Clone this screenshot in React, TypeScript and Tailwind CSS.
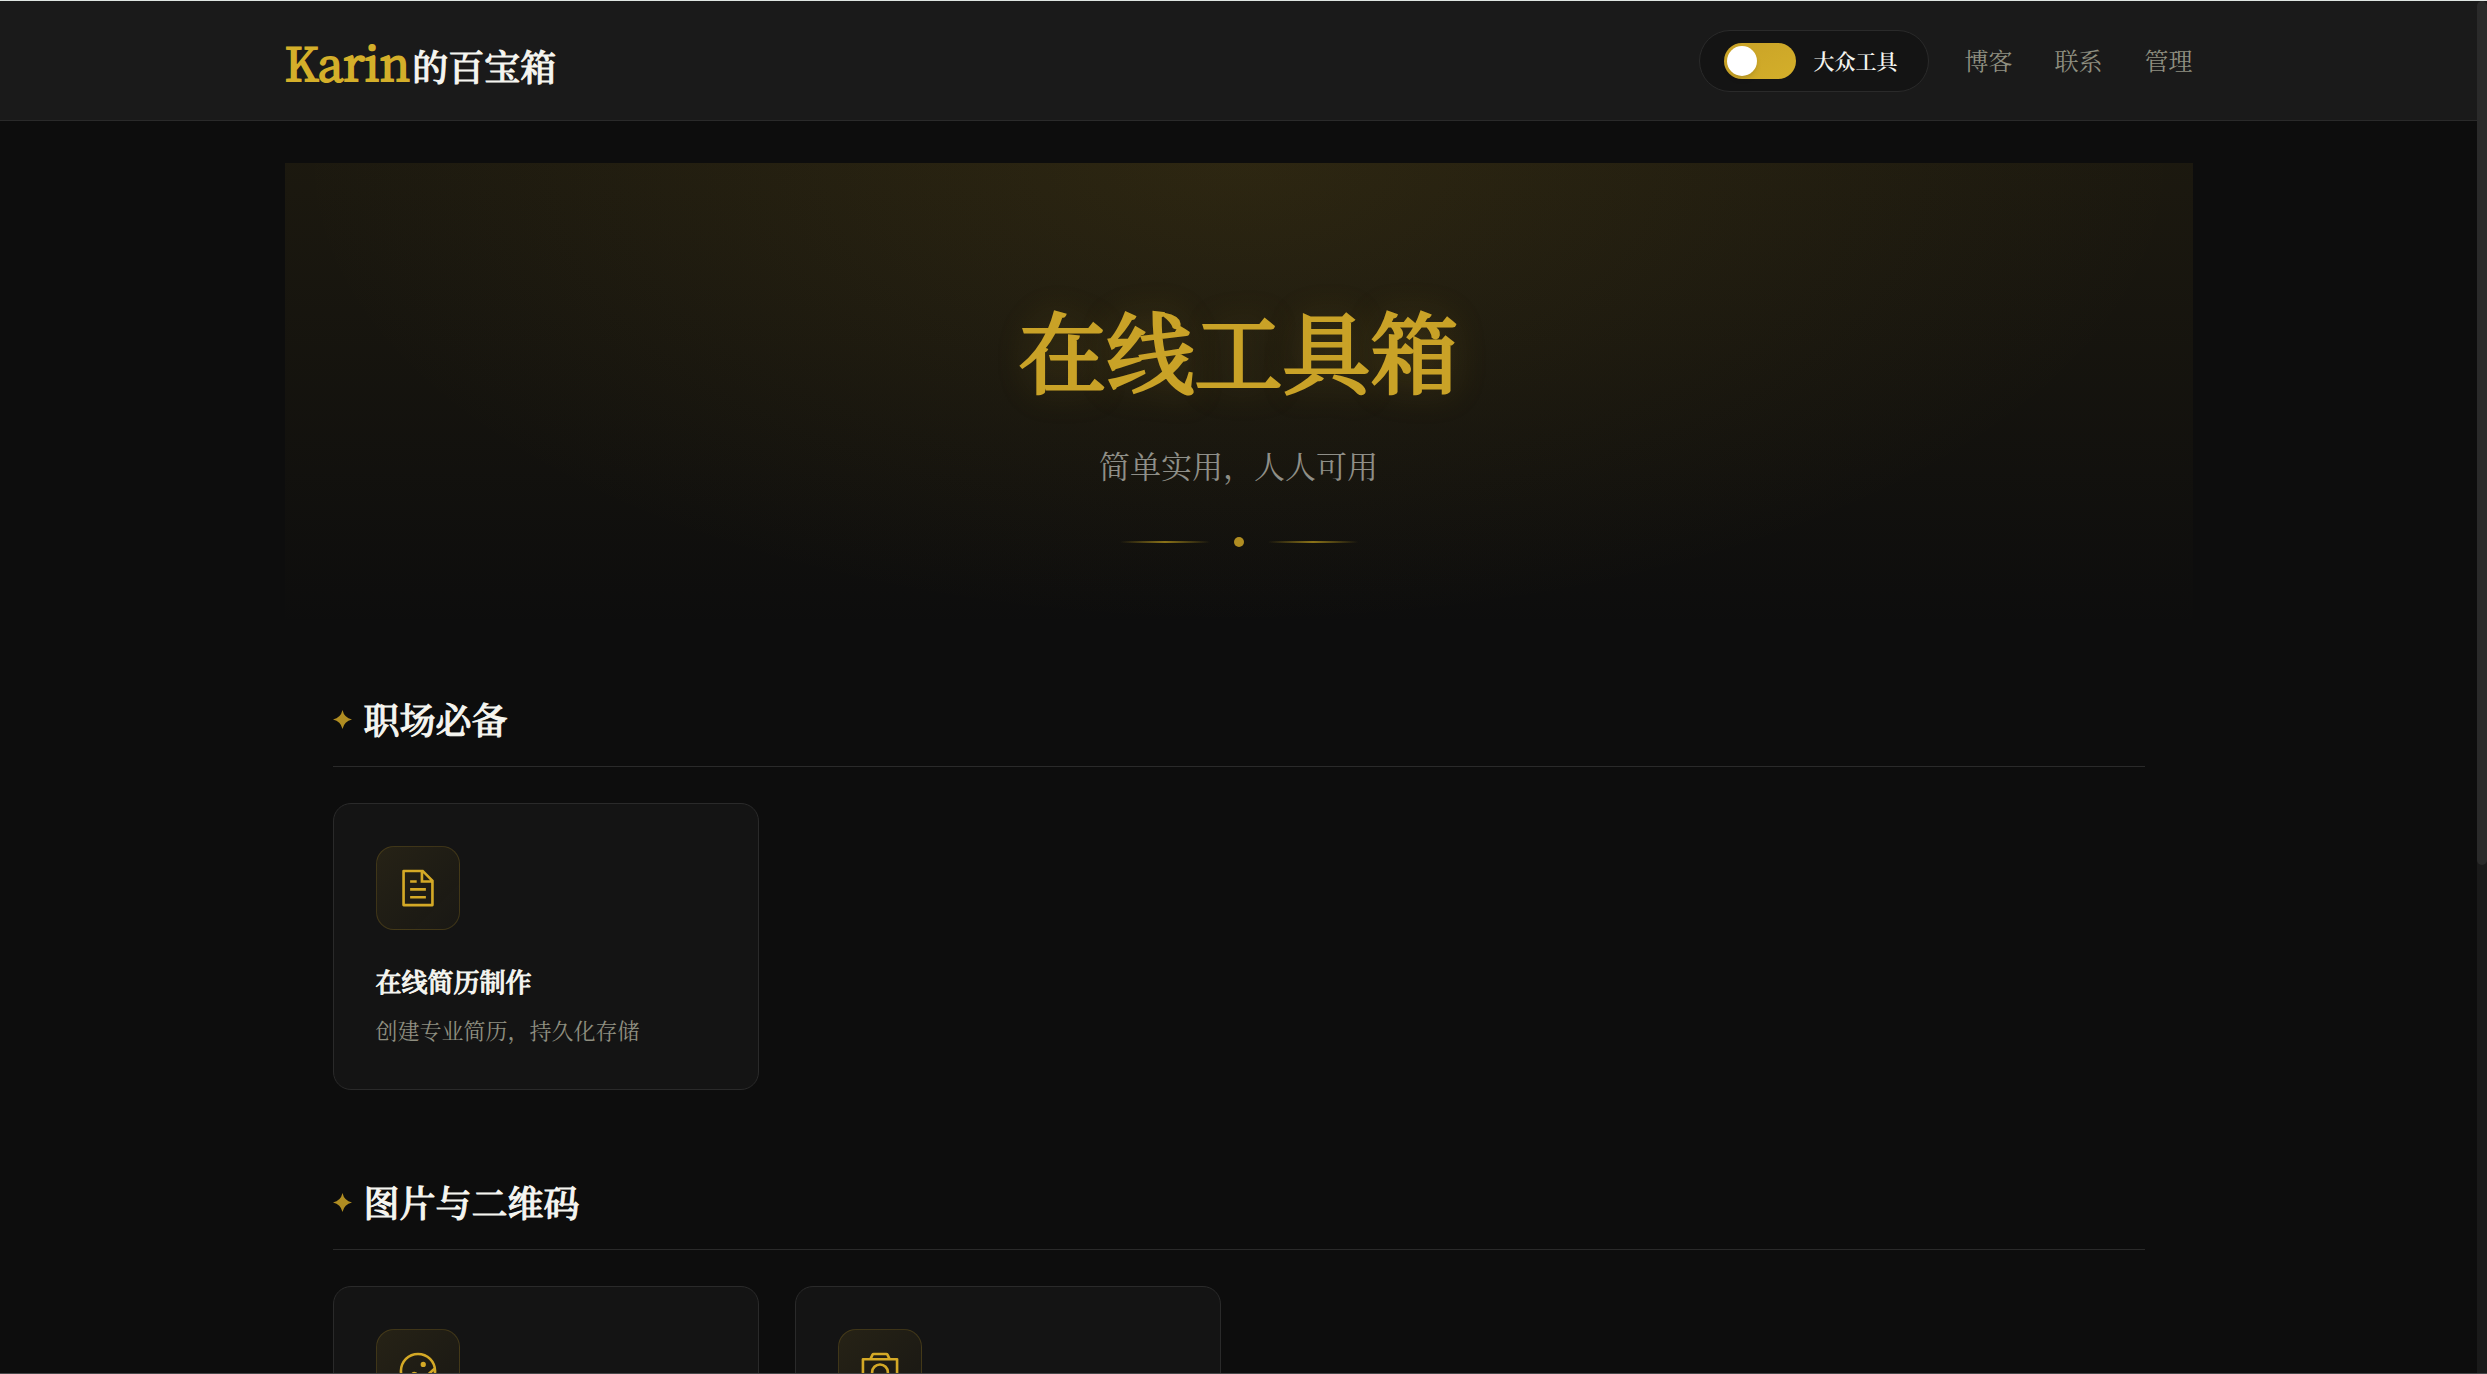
import { useState } from 'react'
import type { ReactNode } from 'react'

type Tool = {
  id: string
  icon: string
  title?: string
  description?: string
}

type Section = {
  title: string
  tools: Tool[]
}

const icons: Record<string, string> = {
  document:
    'M832 384H576V128H192v768h640zm-26.496-64L640 154.496V320zM160 64h480l256 256v608a32 32 0 0 1-32 32H160a32 32 0 0 1-32-32V96a32 32 0 0 1 32-32m160 448h384v64H320zm0-192h160v64H320zm0 384h384v64H320z',
  picture:
    'M512 128a384 384 0 1 0 0 768 384 384 0 0 0 0-768m0-64a448 448 0 1 1 0 896 448 448 0 0 1 0-896M640 288q64 0 64 64t-64 64-64-64 64-64M214.656 790.656l-45.312-45.312 185.664-185.6a96 96 0 0 1 123.712-10.24l138.24 98.688a32 32 0 0 0 39.872-2.176L906.688 422.4l42.624 47.744L699.52 693.696a96 96 0 0 1-119.808 6.592l-138.24-98.752a32 32 0 0 0-41.152 3.456l-185.664 185.6z',
  camera:
    'M896 256H128v576h768zm-199.424-64-32.064-64h-304.96l-32 64zM96 192h160l46.336-92.608A64 64 0 0 1 359.552 64h304.96a64 64 0 0 1 57.216 35.328L768.192 192H928a32 32 0 0 1 32 32v640a32 32 0 0 1-32 32H96a32 32 0 0 1-32-32V224a32 32 0 0 1 32-32m416 512a160 160 0 1 0 0-320 160 160 0 0 0 0 320m0 64a224 224 0 1 1 0-448 224 224 0 0 1 0 448',
}

const sections: Section[] = [
  {
    title: '职场必备',
    tools: [
      {
        id: 'resume',
        icon: 'document',
        title: '在线简历制作',
        description: '创建专业简历，持久化存储',
      },
    ],
  },
  {
    title: '图片与二维码',
    tools: [
      { id: 'picture', icon: 'picture' },
      { id: 'camera', icon: 'camera' },
    ],
  },
]

const links = ['博客', '联系', '管理']

function Container({ children }: { children: ReactNode }) {
  return <div className="mx-auto w-full max-w-[1908px]">{children}</div>
}

function Header() {
  const [general, setGeneral] = useState(true)

  return (
    <header className="border-b border-[#2a2a2a] bg-[#1a1a1a] pt-[29px] pb-7">
      <Container>
        <div className="flex items-center justify-between">
          <a href="#" className="flex items-baseline gap-0.5 text-[#f5f5f0]">
            <span className="text-[46px] leading-[54px] text-[#d4af2a] [-webkit-text-stroke:2px]">Karin</span>
            <span className="text-4xl font-medium [-webkit-text-stroke:1px]">的百宝箱</span>
          </a>

          <div className="flex items-center gap-9">
            <label className="flex cursor-pointer items-center gap-[18px] rounded-full border border-[#2a2a2a] bg-[#141414] py-3 pr-[30px] pl-6">
              <input
                type="checkbox"
                role="switch"
                className="peer sr-only"
                checked={general}
                onChange={(e) => setGeneral(e.target.checked)}
              />
              <span className="flex h-9 w-[72px] items-center rounded-full bg-linear-to-br from-[#c9a227] to-[#d4af2a] p-[3px]">
                <span className="size-[30px] rounded-full bg-white shadow-md" />
              </span>
              <span className="pb-0.5 text-[21px] leading-[34px] font-semibold text-[#f5f5f0]">大众工具</span>
            </label>

            <nav className="flex gap-[42px] pb-0.5">
              {links.map((link) => (
                <a key={link} href="#" className="text-2xl text-[#8f8f80]">
                  {link}
                </a>
              ))}
            </nav>
          </div>
        </div>
      </Container>
    </header>
  )
}

function Hero() {
  return (
    <section className="bg-[radial-gradient(ellipse_at_top,rgba(201,162,39,0.1)_0%,transparent_70%),linear-gradient(180deg,rgba(201,162,39,0.08)_0%,transparent_100%)] px-12 pt-[119px] pb-[84px] text-center">
      <h1 className="text-[88px] leading-[132px] text-[#c9a227] [-webkit-text-stroke:3px] [text-shadow:0_0_36px_rgba(201,162,39,0.3)]">
        在线工具箱
      </h1>
      <p className="mt-[27px] text-[31px] leading-[48px] text-[#8f8f88]">简单实用，人人可用</p>
      <div className="mt-12 flex items-center justify-center gap-6">
        <span className="h-0.5 w-[90px] bg-linear-to-r from-transparent via-[#8b7318] to-transparent" />
        <span className="size-2.5 rounded-full bg-[#b08d22]" />
        <span className="h-0.5 w-[90px] bg-linear-to-r from-transparent via-[#8b7318] to-transparent" />
      </div>
    </section>
  )
}

function ToolCard({ tool }: { tool: Tool }) {
  return (
    <a href={`#${tool.id}`} className="block rounded-[18px] border border-[#2a2a2a] bg-[#141414] p-[42px]">
      <div className="flex size-[84px] items-center justify-center rounded-[18px] border border-[#c9a227]/20 bg-linear-to-br from-[#c9a227]/10 to-[#c9a227]/3">
        <svg className="size-[42px] text-[#d4a926]" viewBox="0 0 1024 1024" fill="currentColor" aria-hidden="true">
          <path d={icons[tool.icon]} />
        </svg>
      </div>
      {tool.title && (
        <h3 className="mt-[31px] text-[26px] leading-10 font-medium text-[#f5f5f0] [-webkit-text-stroke:1px]">
          {tool.title}
        </h3>
      )}
      {tool.description && (
        <p className="mt-3 text-[22px] leading-[34px] text-[#8f8f80]">{tool.description}</p>
      )}
    </a>
  )
}

function ToolSection({ section }: { section: Section }) {
  return (
    <section>
      <div className="mb-9 flex items-center gap-3 border-b border-[#2a2a2a] pb-5">
        <svg className="size-[19px] text-[#b08d22]" viewBox="0 0 20 20" fill="currentColor" aria-hidden="true">
          <path d="M10 0Q11.8 8.2 20 10Q11.8 11.8 10 20Q8.2 11.8 0 10Q8.2 8.2 10 0Z" />
        </svg>
        <h2 className="pb-0.5 text-4xl leading-[51px] font-medium text-[#f5f5f0] [-webkit-text-stroke:1px]">
          {section.title}
        </h2>
      </div>
      <div className="grid grid-cols-4 gap-9">
        {section.tools.map((tool) => (
          <ToolCard key={tool.id} tool={tool} />
        ))}
      </div>
    </section>
  )
}

export default function App() {
  return (
    <div className="flex h-screen overflow-hidden border-t border-b border-t-[#dfe5e2] border-b-[#48484a] bg-[#0d0d0d] font-['Noto_Serif_CJK_SC','Noto_Serif_SC','Liberation_Serif','Noto_Sans_CJK_SC',serif]">
      <div className="min-w-0 flex-1 overflow-hidden">
        <Header />
        <main className="pt-[42px]">
          <Container>
            <Hero />
            <div className="flex flex-col gap-[86px] px-12 pt-[62px]">
              {sections.map((section) => (
                <ToolSection key={section.title} section={section} />
              ))}
            </div>
          </Container>
        </main>
      </div>
      <div className="w-2.5 bg-[#1a1a1a]">
        <div className="h-[63%] rounded-[5px] bg-[#2a2a2a]" />
      </div>
    </div>
  )
}
